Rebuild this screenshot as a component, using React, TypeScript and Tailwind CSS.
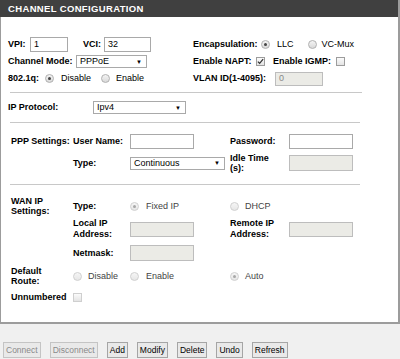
import React from 'react';

// small helpers that look like the old router form controls
function Radio({ checked = false, disabled = false }: { checked?: boolean; disabled?: boolean }) {
    return (
        <span
            className={`shrink-0 w-[9px] h-[9px] rounded-full border flex items-center justify-center bg-gradient-to-b ${
                disabled ? 'border-[#d0d0d0] from-[#f6f6f6] to-[#e6e6e6]' : 'border-[#b0b0b0] from-[#f4f4f4] to-[#d9d9d9]'
            }`}
        >
            {checked && <span className={`w-[3px] h-[3px] rounded-full ${disabled ? 'bg-[#a8a8a8]' : 'bg-[#444]'}`}></span>}
        </span>
    );
}

function Check({ checked = false, disabled = false }: { checked?: boolean; disabled?: boolean }) {
    return (
        <span
            className={`shrink-0 w-[9px] h-[9px] border flex items-center justify-center bg-gradient-to-b from-[#fbfbfb] to-[#e4e4e4] ${
                disabled ? 'border-[#cfcfcf]' : 'border-[#9c9c9c]'
            }`}
        >
            {checked && (
                <svg viewBox="0 0 8 8" className="w-[7px] h-[7px]">
                    <path d="M1 4.2 L3 6.2 L7 1.2" fill="none" stroke="#333" strokeWidth="1.4" />
                </svg>
            )}
        </span>
    );
}

function Field({ w, value = '', disabled = false, h = 'h-[15px]' }: { w: string; value?: string; disabled?: boolean; h?: string }) {
    return (
        <div
            className={`${w} ${h} shrink-0 border flex items-center px-[3px] ${
                disabled ? 'bg-[#ebebe6] border-[#bdbdbd] text-[#888]' : 'bg-white border-[#a9a9a9]'
            }`}
        >
            {value}
        </div>
    );
}

function Select({ w, value }: { w: string; value: string }) {
    return (
        <div className={`${w} h-[13px] shrink-0 border border-[#a9a9a9] bg-white flex items-center justify-between pl-[3px] pr-[4px]`}>
            <span>{value}</span>
            <span className="text-[6px] leading-none">▼</span>
        </div>
    );
}

function Opt({ children, checked, disabled, gap = 'gap-[7px]' }: { children: React.ReactNode; checked?: boolean; disabled?: boolean; gap?: string }) {
    return (
        <span className={`flex items-center ${gap}`}>
            <Radio checked={checked} disabled={disabled} />
            <span className={disabled ? 'text-[#444]' : ''}>{children}</span>
        </span>
    );
}

function Hr({ w = 'w-[352px]' }: { w?: string }) {
    return <div className={`ml-[9px] ${w} h-px bg-[#c8c8c8]`}></div>;
}

const buttons = [
    { label: 'Connect', off: true },
    { label: 'Disconnect', off: true },
    { label: 'Add' },
    { label: 'Modify' },
    { label: 'Delete' },
    { label: 'Undo' },
    { label: 'Refresh' },
];

export default function App() {
    return (
        <div className="w-[400px] h-[359px] bg-[#f0f0f0] font-['Liberation_Sans',Arial,sans-serif] text-[9px] leading-[11px] text-black">
            <div className="h-[324px] bg-white border-l border-r-2 border-b-2 border-[#9c9c9c]">
                {/* Title bar */}
                <div className="h-[17px] -ml-px bg-[#404040] pl-[8px] flex items-center text-white font-bold text-[9.5px] tracking-[0.35px]">
                    CHANNEL CONFIGURATION
                </div>

                {/* ATM / channel */}
                <div className="pt-[19px] pl-[7px] grid grid-cols-[185px_1fr] auto-rows-[17px] items-center">
                    <div className="flex items-center">
                        <span className="w-[22px] font-bold">VPI:</span>
                        <Field w="w-[38px]" value="1" />
                        <span className="ml-[15px] w-[21px] font-bold">VCI:</span>
                        <Field w="w-[47px]" value="32" />
                    </div>
                    <div className="flex items-center">
                        <span className="w-[68px] font-bold">Encapsulation:</span>
                        <Opt checked>LLC</Opt>
                        <span className="ml-[14px]">
                            <Opt gap="gap-[5px]">VC-Mux</Opt>
                        </span>
                    </div>

                    <div className="flex items-center">
                        <span className="w-[68px] font-bold">Channel Mode:</span>
                        <Select w="w-[71px]" value="PPPoE" />
                    </div>
                    <div className="flex items-center">
                        <span className="w-[63px] font-bold">Enable NAPT:</span>
                        <Check checked />
                        <span className="ml-[8px] w-[63px] font-bold">Enable IGMP:</span>
                        <Check />
                    </div>

                    <div className="flex items-center">
                        <span className="w-[37px] font-bold">802.1q:</span>
                        <Opt checked>Disable</Opt>
                        <span className="ml-[10px]">
                            <Opt gap="gap-[6px]">Enable</Opt>
                        </span>
                    </div>
                    <div className="flex items-center">
                        <span className="w-[82px] font-bold">VLAN ID(1-4095):</span>
                        <Field w="w-[48px]" h="h-[14px]" value="0" disabled />
                    </div>
                </div>

                <div className="mt-[5px]">
                    <Hr />
                </div>

                {/* IP protocol */}
                <div className="mt-[6px] pl-[7px] h-[17px] flex items-center">
                    <span className="w-[85px] font-bold">IP Protocol:</span>
                    <Select w="w-[93px]" value="Ipv4" />
                </div>

                <div className="mt-[6px]">
                    <Hr w="w-[350px]" />
                </div>

                {/* PPP */}
                <div className="mt-[7px] pl-[10px] grid grid-cols-[62px_57px_100px_59px_64px] auto-rows-[22px] items-center">
                    <span className="font-bold">PPP Settings:</span>
                    <span className="font-bold">User Name:</span>
                    <Field w="w-[64px]" />
                    <span className="font-bold">Password:</span>
                    <Field w="w-[64px]" />

                    <span></span>
                    <span className="font-bold">Type:</span>
                    <Select w="w-[95px]" value="Continuous" />
                    <span className="font-bold leading-[10px]">
                        Idle Time
                        <br />
                        (s):
                    </span>
                    <Field w="w-[64px]" h="h-[16px]" disabled />
                </div>

                <div className="mt-[10px]">
                    <Hr w="w-[350px]" />
                </div>

                {/* WAN IP */}
                <div className="mt-[10px] pl-[10px] grid grid-cols-[62px_57px_100px_59px_64px] grid-rows-[22px_24px_24px_22px_20px] items-center">
                    <span className="font-bold leading-[10px]">
                        WAN IP
                        <br />
                        Settings:
                    </span>
                    <span className="font-bold">Type:</span>
                    <Opt checked disabled>Fixed IP</Opt>
                    <Opt disabled gap="gap-[6px]">DHCP</Opt>
                    <span></span>

                    <span></span>
                    <span className="font-bold">
                        Local IP
                        <br />
                        Address:
                    </span>
                    <Field w="w-[64px]" disabled />
                    <span className="font-bold">
                        Remote IP
                        <br />
                        Address:
                    </span>
                    <Field w="w-[64px]" disabled />

                    <span></span>
                    <span className="font-bold">Netmask:</span>
                    <Field w="w-[64px]" h="h-[16px]" disabled />
                    <span></span>
                    <span></span>

                    <span className="font-bold leading-[10px]">
                        Default
                        <br />
                        Route:
                    </span>
                    <Opt disabled gap="gap-[6px]">Disable</Opt>
                    <Opt disabled>Enable</Opt>
                    <Opt checked disabled gap="gap-[6px]">Auto</Opt>
                    <span></span>

                    <span className="font-bold">Unnumbered</span>
                    <span className="flex items-center">
                        <Check disabled />
                    </span>
                </div>
            </div>

            {/* Actions */}
            <div className="mt-[18px] pl-[3px] flex items-center gap-[9px]">
                {buttons.map((b) => (
                    <button
                        key={b.label}
                        className={`h-[16px] px-[2px] border bg-[#e9e9e9] text-[8.5px] leading-none ${
                            b.off ? 'border-[#c4c4c4] text-[#8a8a8a]' : 'border-[#a5a5a5] text-black'
                        }`}
                    >
                        {b.label}
                    </button>
                ))}
            </div>
        </div>
    );
}
